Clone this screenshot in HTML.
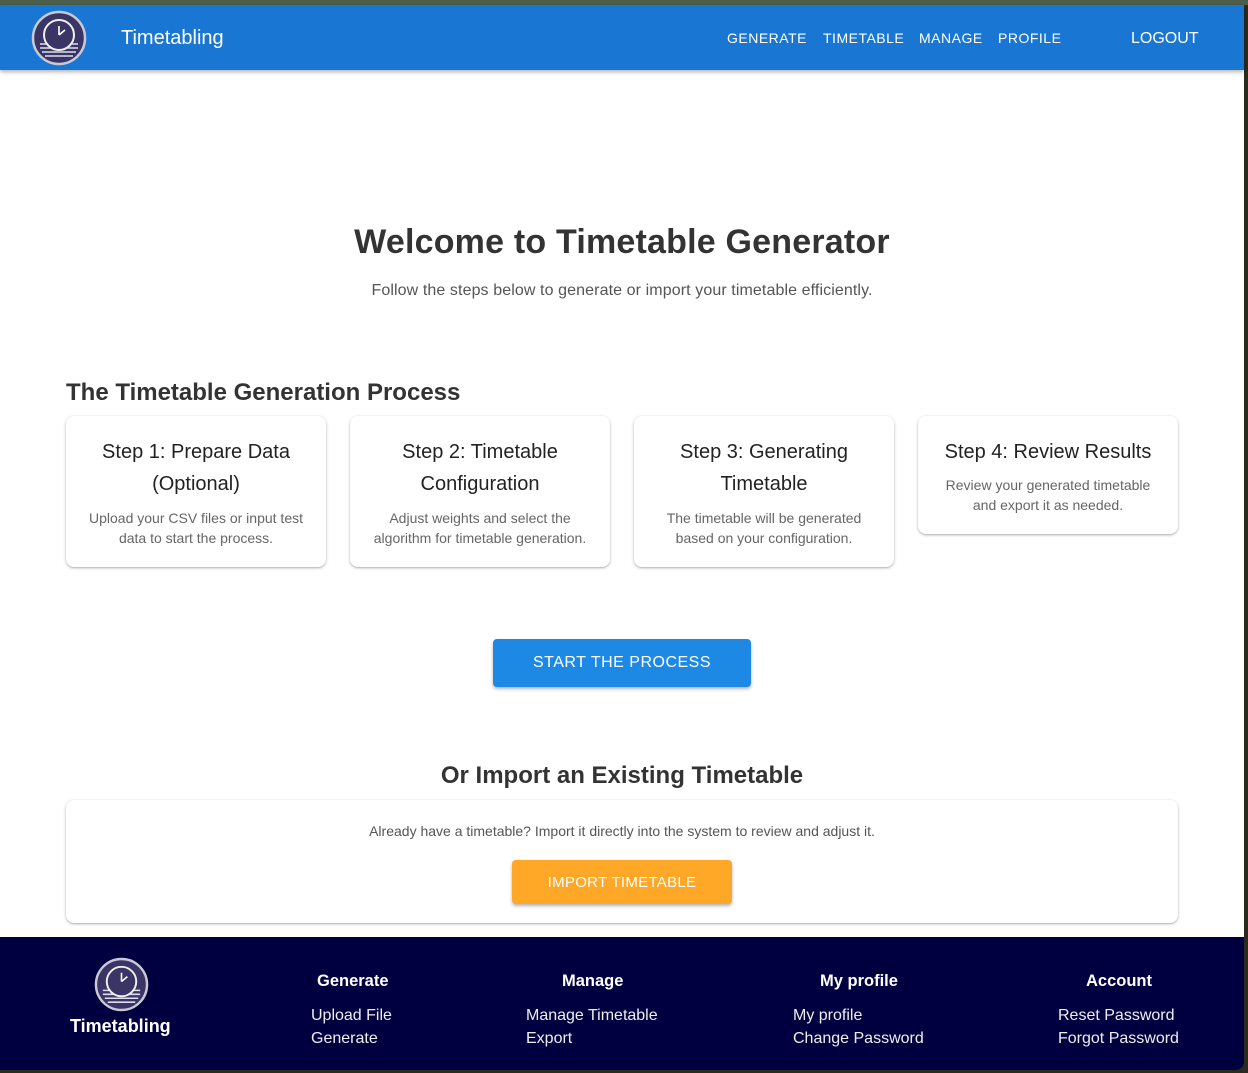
<!DOCTYPE html>
<html><head><meta charset="utf-8"><style>
*{box-sizing:border-box;margin:0;padding:0}
body{width:1248px;height:1073px;background:#2b2a1e;font-family:"Liberation Sans",sans-serif;position:relative;overflow:hidden}
.topstrip{position:absolute;left:0;top:0;width:1248px;height:5px;background:#4a5e4a}
.page{position:absolute;left:0;top:5px;width:1244px;height:932px;background:#fff}
.hdr{position:absolute;left:0;top:5px;width:1244px;height:65px;background:#1976d2;box-shadow:0 2px 4px rgba(0,0,0,.3);color:#fff}
.abs{position:absolute}
.nav{position:absolute;top:25px;font-size:14px;letter-spacing:.5px;color:#fff}
.c{text-align:center}
.card{position:absolute;background:#fff;border-radius:8px;box-shadow:0 1px 3px rgba(0,0,0,.25),0 1px 1px rgba(0,0,0,.1);text-align:center}
.card h3{font-weight:normal;font-size:20px;line-height:32px;color:#222;margin-top:20px}
.card p{font-size:14px;line-height:20px;color:#666;margin-top:8px}
.foot{position:absolute;left:0;top:937px;width:1244px;height:133px;background:#000040;border-bottom-right-radius:8px;color:#fff}
.fh{position:absolute;top:35px;font-weight:bold;font-size:17px;text-align:center}
.fl{position:absolute;top:67px;font-size:16px;line-height:23px;color:#eee}
</style></head><body>
<div class="topstrip"></div>
<div class="page"></div>
<div class="hdr">
<svg class="abs" style="left:31px;top:5px" width="56" height="56" viewBox="0 0 56 56">
<circle cx="28" cy="28" r="26" fill="#3b3566" stroke="#c9c9d6" stroke-width="2.5"/>
<g stroke="#dde" stroke-width="1.6"><line x1="9" y1="34" x2="47" y2="34"/><line x1="9" y1="38" x2="47" y2="38"/><line x1="11" y1="42" x2="45" y2="42"/><line x1="14" y1="46" x2="42" y2="46"/></g>
<circle cx="28" cy="25" r="15" fill="#3b3566" stroke="#eee" stroke-width="2"/>
<path d="M28 25 L28 16 M28 25 L34 20" stroke="#fff" stroke-width="1.6" fill="none"/>
</svg>
<div class="abs" style="left:121px;top:22px;font-size:20px">Timetabling</div>
<div class="nav" style="left:727px">GENERATE</div>
<div class="nav" style="left:823px">TIMETABLE</div>
<div class="nav" style="left:919px">MANAGE</div>
<div class="nav" style="left:998px">PROFILE</div>
<div class="nav" style="left:1131px;font-size:16px;top:25px;letter-spacing:0">LOGOUT</div>
</div>
<div class="abs c" style="left:0;width:1244px;top:223px;font-size:34px;font-weight:bold;color:#333;letter-spacing:.2px">Welcome to Timetable Generator</div>
<div class="abs c" style="left:0;width:1244px;top:282px;font-size:16px;color:#555;letter-spacing:.1px">Follow the steps below to generate or import your timetable efficiently.</div>
<div class="abs" style="left:66px;top:379px;font-size:24px;font-weight:bold;color:#333">The Timetable Generation Process</div>
<div class="card" style="left:66px;top:416px;width:260px;height:151px"><h3>Step 1: Prepare Data<br>(Optional)</h3><p>Upload your CSV files or input test<br>data to start the process.</p></div>
<div class="card" style="left:350px;top:416px;width:260px;height:151px"><h3>Step 2: Timetable<br>Configuration</h3><p>Adjust weights and select the<br>algorithm for timetable generation.</p></div>
<div class="card" style="left:634px;top:416px;width:260px;height:151px"><h3>Step 3: Generating<br>Timetable</h3><p>The timetable will be generated<br>based on your configuration.</p></div>
<div class="card" style="left:918px;top:416px;width:260px;height:118px"><h3>Step 4: Review Results</h3><p style="margin-top:7px">Review your generated timetable<br>and export it as needed.</p></div>
<div class="abs c" style="left:493px;top:639px;width:258px;height:48px;background:#1e88e5;border-radius:4px;box-shadow:0 2px 3px rgba(0,0,0,.3);color:#fff;font-size:16px;line-height:48px;letter-spacing:.5px">START THE PROCESS</div>
<div class="abs c" style="left:0;width:1244px;top:762px;font-size:24px;font-weight:bold;color:#333">Or Import an Existing Timetable</div>
<div class="card" style="left:66px;top:800px;width:1112px;height:123px">
<p style="margin-top:21px;font-size:14px;color:#555">Already have a timetable? Import it directly into the system to review and adjust it.</p>
<div class="abs c" style="left:446px;top:60px;width:220px;height:44px;background:#ffa726;border-radius:4px;box-shadow:0 2px 3px rgba(0,0,0,.3);color:#fff;font-size:15px;line-height:45px;letter-spacing:.3px">IMPORT TIMETABLE</div>
</div>
<div class="foot">
<svg class="abs" style="left:94px;top:20px" width="55" height="55" viewBox="0 0 56 56">
<circle cx="28" cy="28" r="26" fill="#3b3566" stroke="#c9c9d6" stroke-width="2.5"/>
<g stroke="#dde" stroke-width="1.6"><line x1="9" y1="34" x2="47" y2="34"/><line x1="9" y1="38" x2="47" y2="38"/><line x1="11" y1="42" x2="45" y2="42"/><line x1="14" y1="46" x2="42" y2="46"/></g>
<circle cx="28" cy="25" r="15" fill="#3b3566" stroke="#eee" stroke-width="2"/>
<path d="M28 25 L28 16 M28 25 L34 20" stroke="#fff" stroke-width="1.6" fill="none"/>
</svg>
<div class="abs" style="left:70px;top:79px;font-size:18px;font-weight:bold">Timetabling</div>
<div class="fh" style="left:317px;font-size:16.5px">Generate</div>
<div class="fl" style="left:311px">Upload File<br>Generate</div>
<div class="fh" style="left:562px;font-size:16.5px">Manage</div>
<div class="fl" style="left:526px">Manage Timetable<br>Export</div>
<div class="fh" style="left:820px;font-size:16.5px">My profile</div>
<div class="fl" style="left:793px">My profile<br>Change Password</div>
<div class="fh" style="left:1086px;font-size:16.5px">Account</div>
<div class="fl" style="left:1058px">Reset Password<br>Forgot Password</div>
</div>
</body></html>
